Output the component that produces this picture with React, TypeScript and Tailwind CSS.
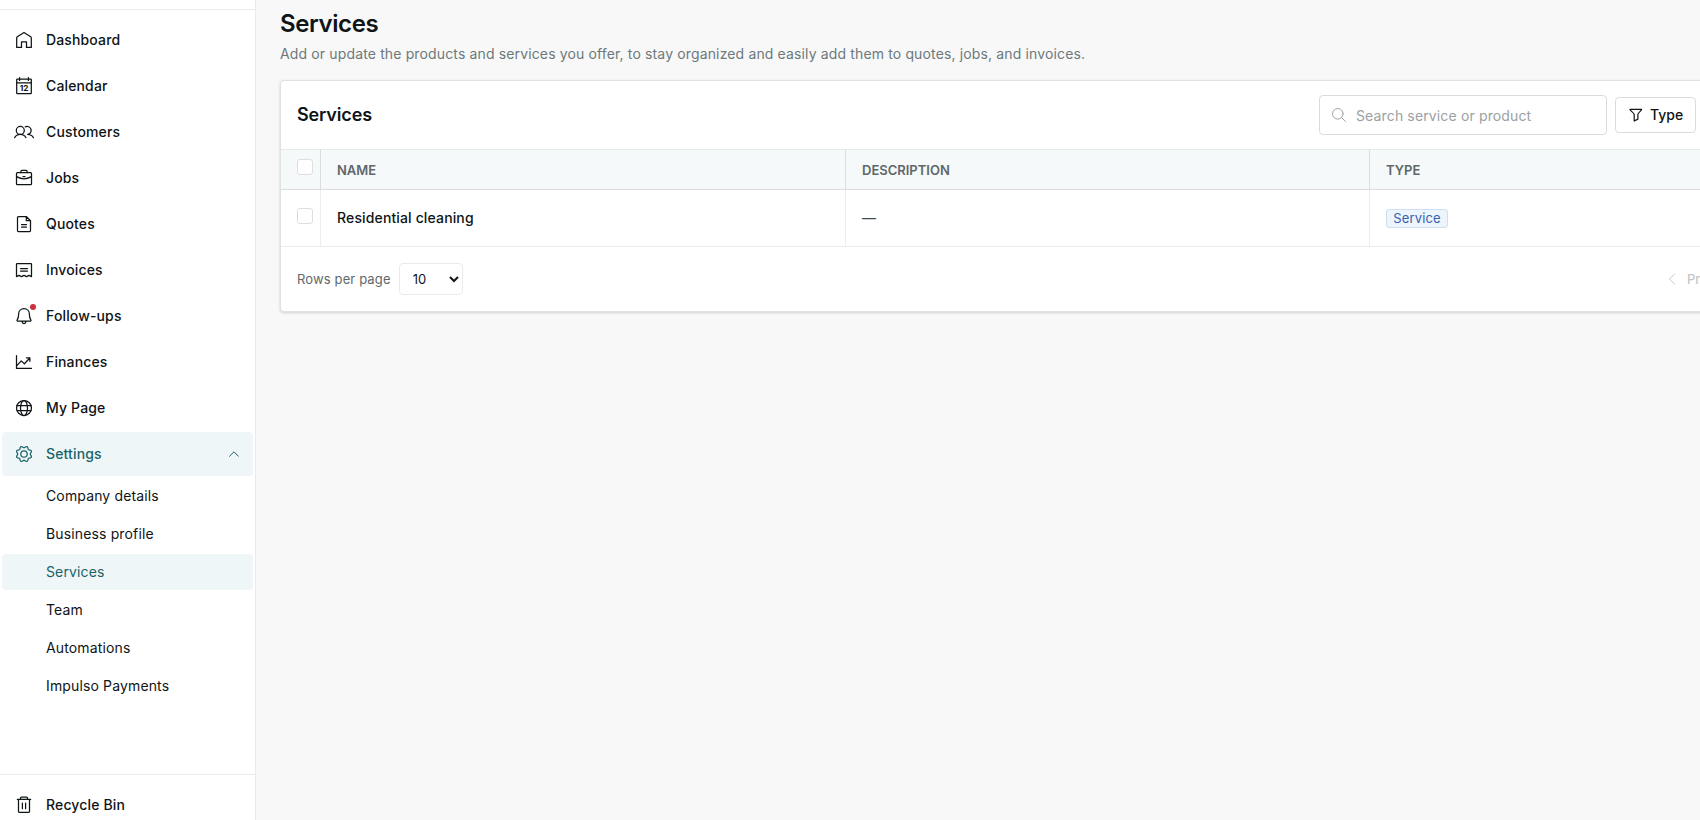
import { useState, type ReactNode } from "react";

interface NavItem {
  label: string;
  icon: ReactNode;
  dot?: boolean;
}

function Icon({ children }: { children: ReactNode }) {
  return (
    <svg
      viewBox="0 0 24 24"
      className="h-6 w-6 shrink-0"
      fill="none"
      stroke="currentColor"
      strokeWidth="1.25"
      strokeLinecap="round"
      strokeLinejoin="round"
    >
      {children}
    </svg>
  );
}

// scalloped outline of the settings gear
const gearPoints = Array.from({ length: 96 }, (_, i) => {
  const a = (i / 96) * Math.PI * 2;
  const r = 7.1 + 0.85 * Math.cos(8 * a + Math.PI);
  return `${(12 + r * Math.cos(a)).toFixed(2)},${(12 + r * Math.sin(a)).toFixed(2)}`;
}).join(" ");

const navItems: NavItem[] = [
  {
    label: "Dashboard",
    icon: (
      <Icon>
        <path d="M9.5 19.4H4.7V10c0-.5.2-.9.600-1.200L12 4.500l6.700 4.300c.4.300.600.700.600 1.200v9.400h-4.800v-5.600h-5z" />
      </Icon>
    ),
  },
  {
    label: "Calendar",
    icon: (
      <Icon>
        <rect x="4.7" y="5.2" width="14.6" height="14.3" rx="0.6" />
        <path d="M4.7 8.8h14.6M7.6 3.6v2.8M16.4 3.6v2.8" />
        <text
          x="12"
          y="17.2"
          textAnchor="middle"
          fontSize="8.2"
          fontWeight="700"
          letterSpacing="-0.2"
          fill="currentColor"
          stroke="none"
        >
          12
        </text>
      </Icon>
    ),
  },
  {
    label: "Customers",
    icon: (
      <Icon>
        <circle cx="8.3" cy="10.4" r="4" />
        <path d="M2.7 17.6c1-1.9 3-3.2 5.6-3.2s4.6 1.3 5.6 3.2" />
        <path d="M13.3 6.900a4 4 0 1 1 2.400 7.500c2.600 0 4.600 1.300 5.700 3.200" />
      </Icon>
    ),
  },
  {
    label: "Jobs",
    icon: (
      <Icon>
        <rect x="4.5" y="6.5" width="15" height="12.2" rx="1" />
        <path d="M8.9 6.300V5.300c0-.6.4-1 1-1h4.200c.6 0 1 .4 1 1v1M4.600 10.600c4.600 2.700 10.200 2.700 14.800 0M11 10.500h2" />
      </Icon>
    ),
  },
  {
    label: "Quotes",
    icon: (
      <Icon>
        <path d="M14.3 4.500H6.400c-.5 0-.9.4-.9.900v13.200c0 .5.4.9.9.900h11.200c.5 0 .9-.4.900-.9V8.700zM14.300 4.500v4.200h4.200M9.500 12.600h5M9.500 15.100h5" />
      </Icon>
    ),
  },
  {
    label: "Invoices",
    icon: (
      <Icon>
        <path d="M4.5 18.600V6.300c0-.4.3-.7.7-.7h13.600c.4 0 .7.3.7.7v12.300l-2.500-1.200-2.500 1.200-2.500-1.200-2.500 1.200L7 17.400zM8.500 10.500h7M8.500 13h7" />
      </Icon>
    ),
  },
  {
    label: "Follow-ups",
    dot: true,
    icon: (
      <Icon>
        <path d="M6.600 10.200c0-3.300 2.400-5.500 5.400-5.500s5.400 2.200 5.400 5.500c0 3 .6 4.700 1.500 5.900.3.500 0 1.100-.5 1.100H5.600c-.5 0-.8-.6-.5-1.100.9-1.200 1.500-2.900 1.500-5.900zM10 17.500c.1 1.200.9 2 2 2s1.900-.8 2-2" />
      </Icon>
    ),
  },
  {
    label: "Finances",
    icon: (
      <Icon>
        <path d="M4.500 5.500v12.900h15M4.700 15.900l4.500-5 3.200 2.900 5.200-5.600M14.400 7.800h3.500v3.500" />
      </Icon>
    ),
  },
  {
    label: "My Page",
    icon: (
      <Icon>
        <circle cx="12" cy="12" r="7.5" />
        <ellipse cx="12" cy="12" rx="3.5" ry="7.5" />
        <path d="M5 9.500h14M5 14.500h14" />
      </Icon>
    ),
  },
];

const settingsItems = [
  "Company details",
  "Business profile",
  "Services",
  "Team",
  "Automations",
  "Impulso Payments",
];

const services = [
  { id: 1, name: "Residential cleaning", description: "—", type: "Service" },
];

function Checkbox() {
  return (
    <input
      type="checkbox"
      className="block h-4 w-4 appearance-none rounded-[3px] border border-[#dcdfe0] bg-white"
    />
  );
}

export default function App() {
  const [rows, setRows] = useState("10");

  return (
    <div className="flex h-[820px] w-[1700px] overflow-hidden bg-[#f8f8f8] font-['Inter',sans-serif] text-sm text-[#0f1416]">
      {/* Sidebar */}
      <aside className="flex w-64 shrink-0 flex-col border-r border-[#e9ebeb] bg-white">
        <div className="h-[10px] shrink-0 border-b border-[#e9ebeb]" />
        <nav className="flex flex-1 flex-col gap-0.5 px-0.5 pt-2 tracking-[0.14px]">
          {navItems.map((item) => (
            <a
              key={item.label}
              href="#"
              className="flex h-11 items-center gap-2.5 rounded pl-2.5 font-medium"
            >
              <span className="relative">
                {item.icon}
                {item.dot && (
                  <span className="absolute top-0 right-0 h-1.5 w-1.5 rounded-full bg-[#cc2f3e]" />
                )}
              </span>
              {item.label}
            </a>
          ))}
          <a
            href="#"
            className="flex h-11 items-center gap-2.5 rounded bg-[#eef6f8] pr-3.5 pl-2.5 font-medium text-[#1b6369]"
          >
            <Icon>
              <polygon points={gearPoints} />
              <circle cx="12" cy="12" r="3.2" />
            </Icon>
            <span className="flex-1">Settings</span>
            <svg
              viewBox="0 0 10 6"
              className="h-1.5 w-2.5"
              fill="none"
              stroke="currentColor"
              strokeLinecap="round"
              strokeLinejoin="round"
            >
              <path d="M0.500 5.300L5 0.800l4.500 4.500" />
            </svg>
          </a>
          {settingsItems.map((label) => (
            <a
              key={label}
              href="#"
              className={`flex h-9 items-center rounded pl-11 ${
                label === "Services" ? "bg-[#eef6f8] text-[#1b6369]" : ""
              }`}
            >
              {label}
            </a>
          ))}
        </nav>
        <div className="h-[46px] shrink-0 border-t border-[#e9ebeb] px-0.5 pt-2">
          <a
            href="#"
            className="flex h-11 items-center gap-2.5 rounded pl-2.5 font-medium tracking-[0.14px]"
          >
            <Icon>
              <path d="M5.300 6.300h13.400M8.500 6V5.100c0-.6.4-1.100 1-1.100h5c.6 0 1 .5 1 1.100V6M6.500 6.500v12.100c0 .4.300.7.700.7h9.600c.4 0 .7-.3.700-.7V6.500M10.400 10v5.700M13.600 10v5.700" />
            </Icon>
            Recycle Bin
          </a>
        </div>
      </aside>

      {/* Main */}
      <main className="min-w-0 flex-1 pl-6">
        <h1 className="pt-[7px] text-2xl leading-[34px] font-semibold tracking-[-0.4px]">
          Services
        </h1>
        <p className="mt-[3px] leading-5 tracking-[0.14px] text-[#6d787b]">
          Add or update the products and services you offer, to stay organized
          and easily add them to quotes, jobs, and invoices.
        </p>

        <section className="mt-4 w-[1433px] rounded border border-[#dfe1e2] bg-white shadow-[0_1px_3px_rgba(0,0,0,0.16)]">
          <div className="flex h-[68px] items-center justify-between px-4">
            <h2 className="text-lg font-semibold tracking-[-0.15px]">Services</h2>
            <div className="flex items-center gap-2">
              <label className="flex h-10 w-72 items-center gap-[9px] rounded border border-[#d9dcdd] pl-[11px]">
                <svg
                  viewBox="0 0 16 16"
                  className="h-4 w-4 shrink-0 text-[#9fa4a6]"
                  fill="none"
                  stroke="currentColor"
                  strokeLinecap="round"
                >
                  <circle cx="6.8" cy="6.8" r="5.3" />
                  <path d="M10.700 10.700l3.800 3.800" />
                </svg>
                <input
                  placeholder="Search service or product"
                  className="min-w-0 flex-1 pt-0.5 tracking-[0.14px] outline-none placeholder:text-[#9ba0a2]"
                />
              </label>
              <button className="flex h-9 w-[81px] items-center gap-[7px] rounded border border-[#d9dcdd] pl-[13px] font-medium">
                <svg
                  viewBox="0 0 14 14"
                  className="h-3.5 w-3.5 shrink-0"
                  fill="none"
                  stroke="currentColor"
                  strokeWidth="1.2"
                  strokeLinejoin="round"
                >
                  <path d="M0.900 1.300h11.700c0 1.500-3.700 3.300-3.700 5.200v4.600L5.200 13V6.500C5.200 4.600 0.900 2.800 0.900 1.300z" />
                </svg>
                Type
              </button>
            </div>
          </div>

          <table className="w-full table-fixed border-separate border-spacing-0 text-left">
            <colgroup>
              <col className="w-10" />
              <col className="w-[525px]" />
              <col className="w-[524px]" />
              <col />
            </colgroup>
            <thead>
              <tr className="h-[41px] bg-[#f5f9f9] text-[13px] text-[#5f6769]">
                <th className="border-y border-r border-t-[#e9ebeb] border-r-[#d9dddf] border-b-[#d9dddf] p-0 pt-[9px] pl-4 align-top">
                  <Checkbox />
                </th>
                <th className="border-y border-r border-t-[#e9ebeb] border-r-[#d9dddf] border-b-[#d9dddf] p-0 pt-0.5 pl-4 font-semibold">
                  NAME
                </th>
                <th className="border-y border-r border-t-[#e9ebeb] border-r-[#d9dddf] border-b-[#d9dddf] p-0 pt-0.5 pl-4 font-semibold">
                  DESCRIPTION
                </th>
                <th className="border-y border-t-[#e9ebeb] border-b-[#d9dddf] p-0 pt-0.5 pl-4 font-semibold">
                  TYPE
                </th>
              </tr>
            </thead>
            <tbody>
              {services.map((s) => (
                <tr key={s.id} className="h-[57px]">
                  <td className="border-r border-b border-[#eceeee] p-0 pt-[18px] pl-4 align-top">
                    <Checkbox />
                  </td>
                  <td className="border-r border-b border-[#eceeee] p-0 pl-4 font-medium tracking-[0.14px]">
                    {s.name}
                  </td>
                  <td className="border-r border-b border-[#eceeee] p-0 pl-4 text-[#42494b]">
                    {s.description}
                  </td>
                  <td className="border-b border-[#eceeee] p-0 pl-4">
                    <span className="flex h-[19px] w-[62px] items-center justify-center rounded-[3px] border border-[#cddff0] bg-[#edf4fc] text-[13px] tracking-[0.13px] text-[#3562ad]">
                      {s.type}
                    </span>
                  </td>
                </tr>
              ))}
            </tbody>
          </table>

          <div className="flex h-16 items-center justify-between pl-4 text-[13px]">
            <div className="flex items-center gap-2">
              <span className="tracking-[0.13px] text-[#5f6769]">Rows per page</span>
              <select
                value={rows}
                onChange={(e) => setRows(e.target.value)}
                className="h-8 w-16 rounded border border-[#e9ebeb] bg-white pl-[9px]"
              >
                <option>10</option>
                <option>25</option>
                <option>50</option>
              </select>
            </div>
            <button className="flex w-11 items-center gap-[11px] text-[#c3c7c8]">
              <svg
                viewBox="0 0 8 12"
                className="h-3 w-2 shrink-0"
                fill="none"
                stroke="currentColor"
                strokeLinecap="round"
                strokeLinejoin="round"
              >
                <path d="M6.500 1L1.500 6l5 5" />
              </svg>
              <span className="font-medium">Previous</span>
            </button>
          </div>
        </section>
      </main>
    </div>
  );
}
